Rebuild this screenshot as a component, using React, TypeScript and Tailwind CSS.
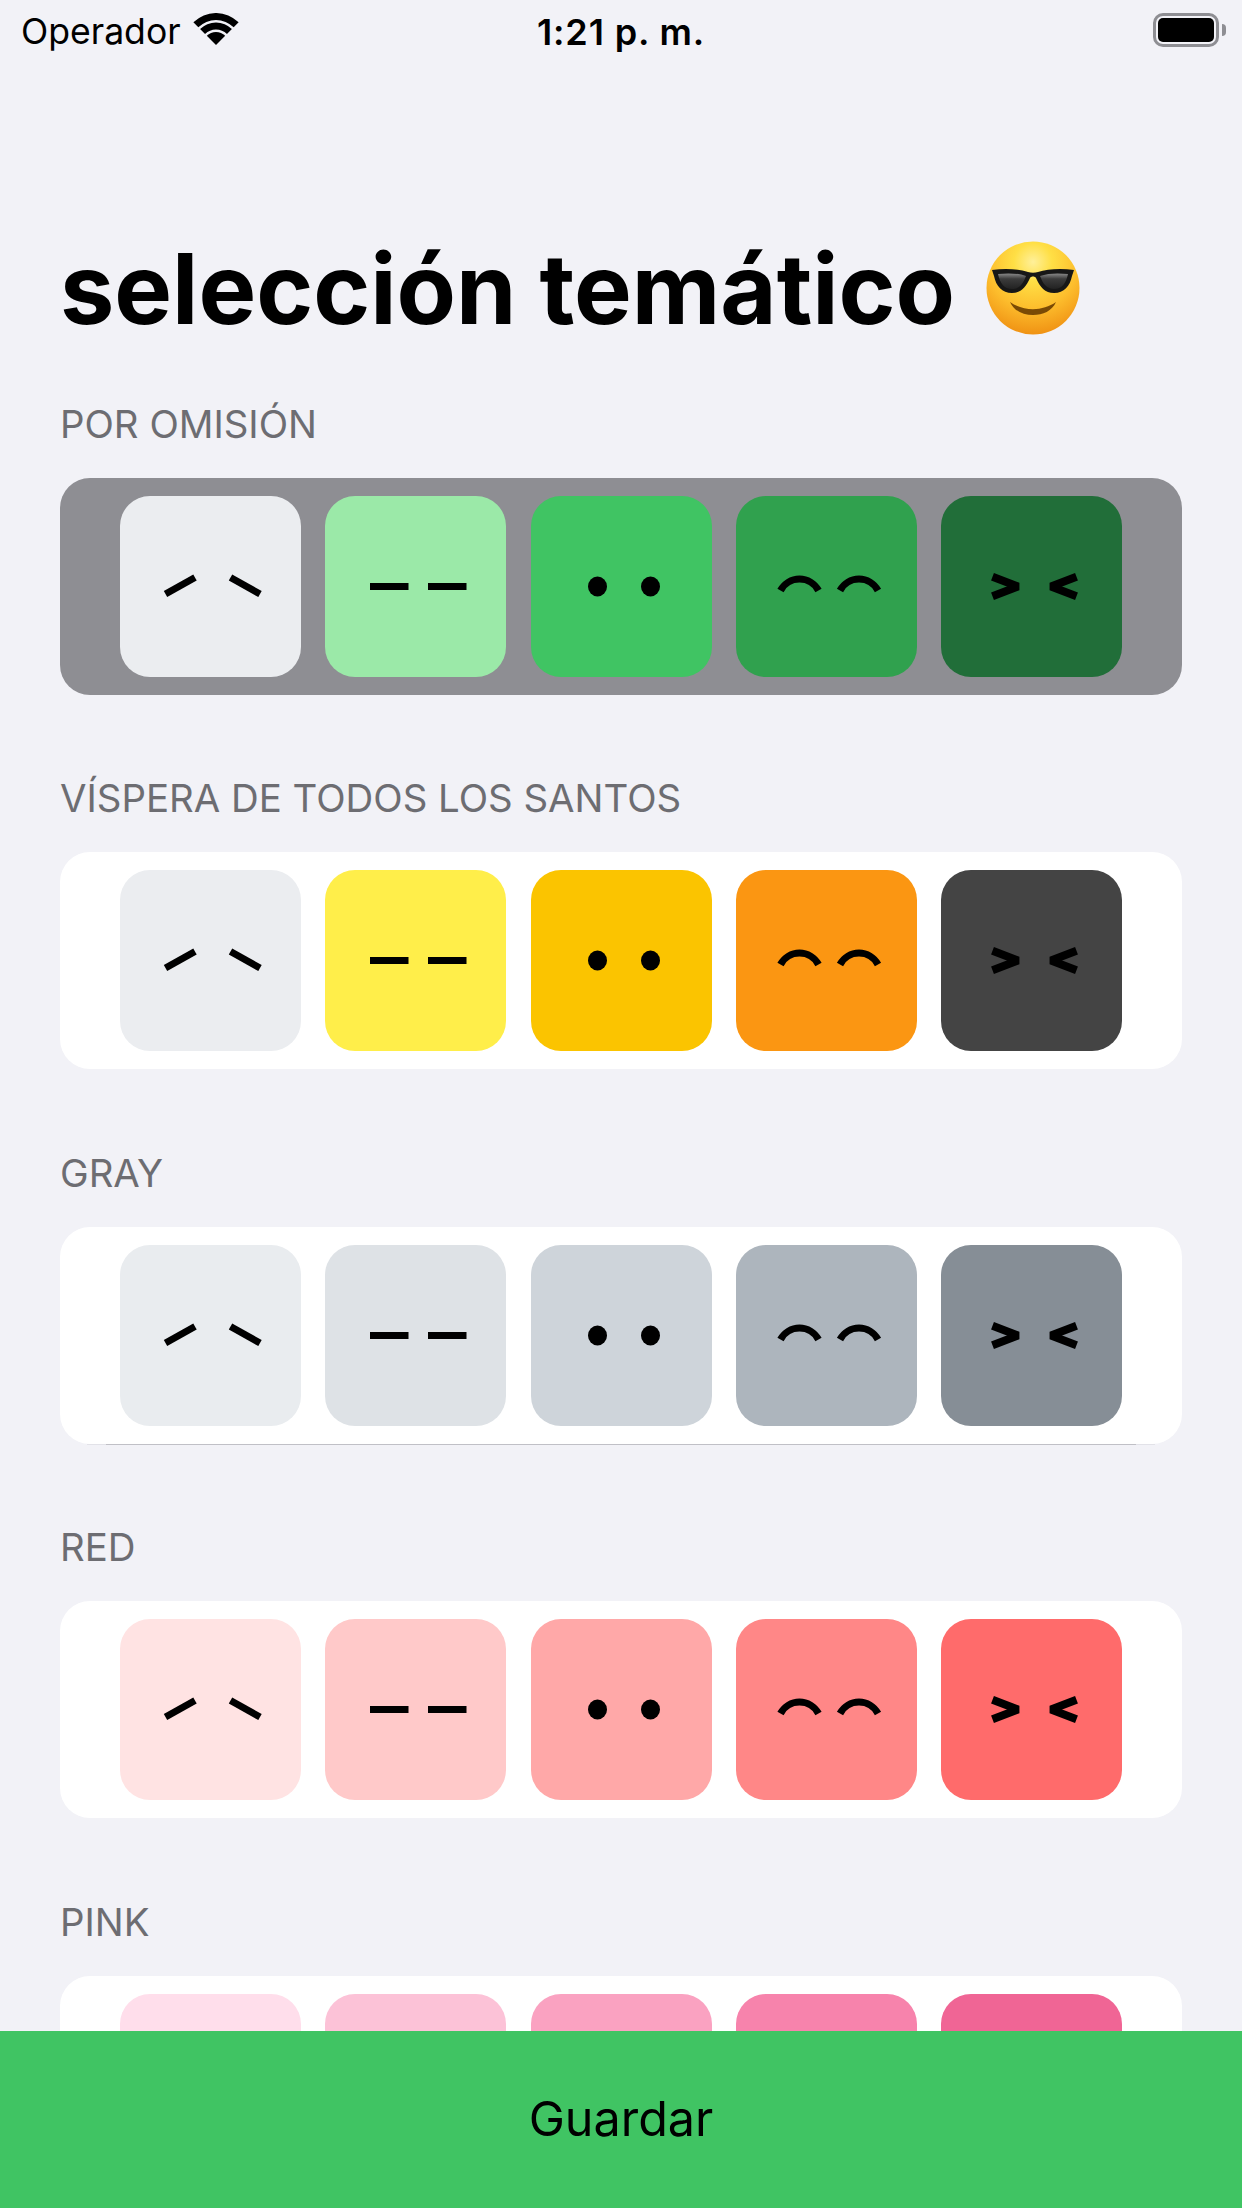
import React from 'react';

type Theme = {
	name: string;
	colors: string[];
	selected?: boolean;
	divider?: boolean;
};

const themes: Theme[] = [
	{ name: 'POR OMISIÓN', colors: ['#ebedf0', '#9be9a8', '#40c463', '#30a14e', '#216e39'], selected: true },
	{ name: 'VÍSPERA DE TODOS LOS SANTOS', colors: ['#ebedf0', '#ffee4a', '#fbc400', '#fb9612', '#444444'] },
	{ name: 'GRAY', colors: ['#e9ecef', '#dee2e6', '#ced4da', '#adb5bd', '#868e96'], divider: true },
	{ name: 'RED', colors: ['#ffe3e3', '#ffc9c9', '#ffa8a8', '#ff8787', '#ff6b6b'] },
	{ name: 'PINK', colors: ['#ffdeeb', '#fcc2d7', '#faa2c1', '#f783ac', '#f06595'] },
];

const faces = [
	<g key="0" fill="none" stroke="#000" strokeWidth="7">
		<path d="M45.5 98 L75 81.5" />
		<path d="M110.5 81.5 L140 98" />
	</g>,
	<g key="1" fill="none" stroke="#000" strokeWidth="7">
		<path d="M45 90.5 H83.5" />
		<path d="M103 90.5 H141.5" />
	</g>,
	<g key="2" fill="#000">
		<ellipse cx="66.5" cy="90.5" rx="9.5" ry="10" />
		<ellipse cx="119.5" cy="90.5" rx="9.5" ry="10" />
	</g>,
	<g key="3" fill="none" stroke="#000" strokeWidth="7">
		<path d="M44.5 94.5 A21.5 21.5 0 0 1 82.5 94.5" />
		<path d="M104 94.5 A21.5 21.5 0 0 1 142 94.5" />
	</g>,
	<g key="4" fill="none" stroke="#000" strokeWidth="8" strokeLinejoin="bevel">
		<path d="M51.5 80.7 L77 90.5 L51.5 100.3" />
		<path d="M135.500 80.7 L110 90.5 L135.500 100.3" />
	</g>,
];

const CoolEmoji = () => (
	<svg width="96" height="96" viewBox="0 0 96 96" className="shrink-0">
		<defs>
			<radialGradient id="face" cx="50%" cy="22%" r="82%">
				<stop offset="0%" stopColor="#fff09a" />
				<stop offset="25%" stopColor="#ffdf45" />
				<stop offset="60%" stopColor="#fdbe2d" />
				<stop offset="100%" stopColor="#ee8c10" />
			</radialGradient>
			<linearGradient id="lens" x1="0" y1="0" x2="0" y2="1">
				<stop offset="0%" stopColor="#8a8a8a" />
				<stop offset="35%" stopColor="#3c3c3c" />
				<stop offset="100%" stopColor="#222" />
			</linearGradient>
		</defs>
		<circle cx="48" cy="48" r="46.5" fill="url(#face)" />
		<path d="M7 30 C20 28 34 29 43 32 C46 33 50 33 53 32 C62 29 76 28 89 30 L87 36 C85 46 79 53 69 53 C60 53 55 47 51 38 C50 36 46 36 45 38 C41 47 36 53 27 53 C17 53 11 46 9 36 Z" fill="#171717" />
		<path d="M13 34 C22 33 33 33 41 36 C38 44 34 49 27 49 C19 49 15 43 13 34 Z" fill="url(#lens)" />
		<path d="M83 34 C74 33 63 33 55 36 C58 44 62 49 69 49 C77 49 81 43 83 34 Z" fill="url(#lens)" />
		<path d="M25 62 C38 71.500 58 71.500 71 62 C67 71 58 75 48 75 C38 75 29 71 25 62 Z" fill="#7a4a05" />
	</svg>
);

const WifiIcon = () => (
	<svg width="46" height="32" viewBox="0 0 46 32" className="-mt-[6px]">
		<path d="M0.37 9.37 A32 32 0 0 1 45.63 9.37 L40.68 14.32 A25 25 0 0 0 5.32 14.32 Z" fill="#000" />
		<path d="M7.1 16.09 A22.5 22.5 0 0 1 38.9 16.09 L33.96 21.04 A15.5 15.5 0 0 0 12.04 21.04 Z" fill="#000" />
		<path d="M13.81 22.81 A13 13 0 0 1 32.19 22.81 L23 32 Z" fill="#000" />
	</svg>
);

const Battery = () => (
	<div className="flex items-center -mt-[4px]">
		<div className="w-[66px] h-[34px] rounded-[10px] border-[3px] border-[#8e8e93] p-[2px]">
			<div className="w-full h-full rounded-[5px] bg-black" />
		</div>
		<div className="w-[4px] h-[12px] rounded-r-[4px] bg-[#8e8e93] ml-[3px]" />
	</div>
);

const Tile = ({ color, face }: { color: string; face: number }) => (
	<div className="w-[181px] h-[181px] rounded-[30px]" style={{ backgroundColor: color }}>
		<svg width="181" height="181" viewBox="0 0 181 181">
			{faces[face]}
		</svg>
	</div>
);

export default function App() {
	return (
		<div className="relative w-[1242px] h-[2208px] overflow-hidden bg-[#f2f2f7] font-['Inter',sans-serif] text-black">
			<div className="relative h-[64px] flex items-center justify-between pl-[21px] pr-[16px]">
				<div className="flex items-center gap-[12px]">
					<span className="text-[35.6px] leading-none">Operador</span>
					<WifiIcon />
				</div>
				<span className="absolute left-0 right-0 text-center text-[36px] leading-none font-semibold tracking-[0.85px]">
					1:21 p. m.
				</span>
				<Battery />
			</div>

			<div className="flex items-center h-[120px] mt-[164px] pl-[60px] gap-[30px]">
				<h1 className="text-[97px] leading-none font-bold whitespace-nowrap">selección temático</h1>
				<CoolEmoji />
			</div>

			<div className="mt-[31px] flex flex-col">
				{themes.map((theme) => (
					<section key={theme.name} className="h-[374.4px] px-[60px]">
						<div className="h-[99px] pt-[23px] text-[38.4px] leading-[44px] text-[#6d6d72]">{theme.name}</div>
						<div
							className={`relative h-[217px] rounded-[30px] flex items-center pl-[60px] gap-[24.25px] ${
								theme.selected ? 'bg-[#8e8e93]' : 'bg-white'
							}`}
						>
							{theme.colors.map((color, i) => (
								<Tile key={i} color={color} face={i} />
							))}
							{theme.divider && (
								<>
									<div className="absolute left-[27px] right-[27px] bottom-[-1px] h-px bg-[#e2e2e8]" />
									<div className="absolute left-[46px] right-[46px] bottom-[-1px] h-px bg-[#c0c0c6]" />
								</>
							)}
						</div>
					</section>
				))}
			</div>

			<div className="absolute left-0 right-0 bottom-0 h-[177px] bg-[#40c463] flex items-center justify-center text-[48.5px]">
				Guardar
			</div>
		</div>
	);
}
